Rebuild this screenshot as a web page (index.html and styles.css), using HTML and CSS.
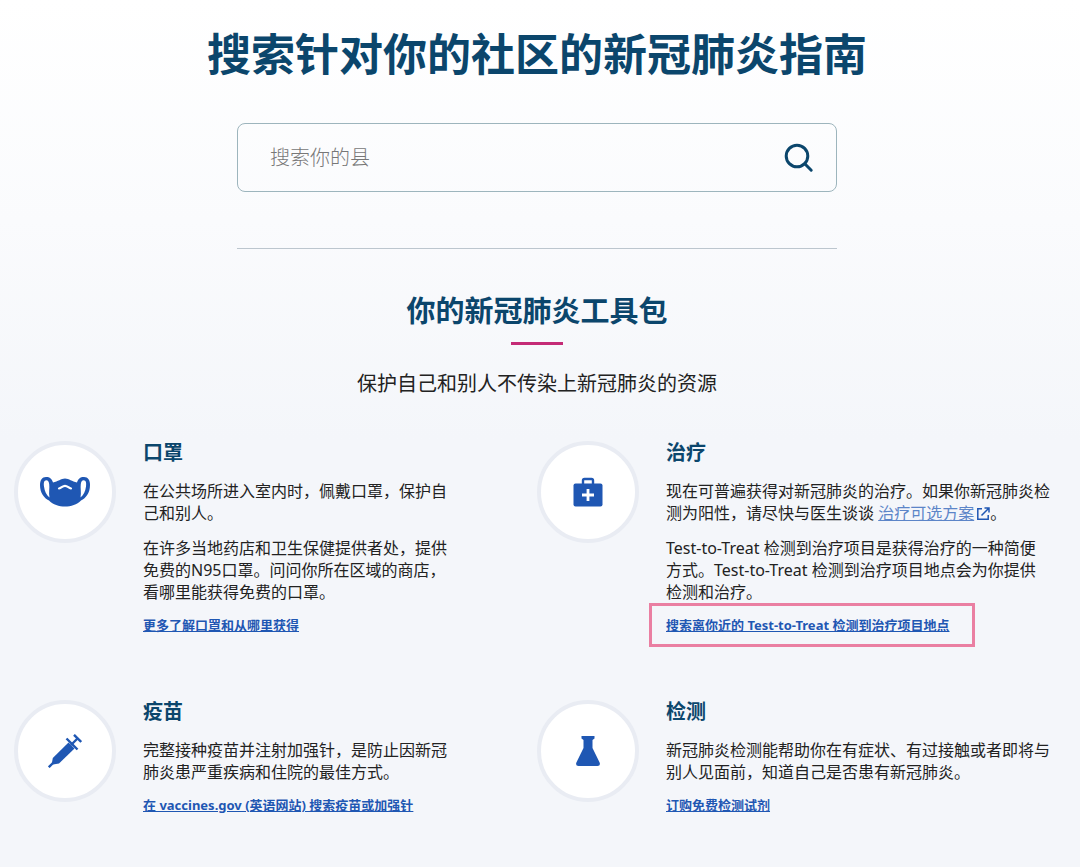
FILE: index.html
```html
<!DOCTYPE html>
<html lang="zh-CN">
<head>
  <meta charset="UTF-8">
  <meta name="viewport" content="width=device-width, initial-scale=1">
  <title>新冠肺炎指南</title>
  <link rel="stylesheet" href="styles.css">
</head>
<body>

  <main class="page">
    <section class="search">
      <h1>搜索针对你的社区的新冠肺炎指南</h1>
      <form class="search-box">
        <input type="text" id="county" aria-label="搜索你的县" placeholder="搜索你的县">
        <button type="submit" aria-label="搜索">
          <svg width="30" height="30" viewBox="0 0 30 30" fill="none" stroke="#0b466c" stroke-width="3" stroke-linecap="round">
            <circle cx="13" cy="13" r="10.8"/>
            <path d="M20.8 20.8L27.2 27.2"/>
          </svg>
        </button>
      </form>
    </section>

    <section class="toolkit">
      <h2>你的新冠肺炎工具包</h2>
      <p class="intro">保护自己和别人不传染上新冠肺炎的资源</p>

      <div class="items">
        <article class="item">
          <div class="icon">
            <svg width="50" height="32" viewBox="0 0 50 32">
              <path d="M6 1C2 1 0 4 0 9C0 17 4 22 9 24.500C13 28.500 19 30.500 25 30.500C31 30.500 37 28.500 41 24.500C46 22 50 17 50 9C50 4 48 1 44 1C40 1 38 3 37 6.500C32 5.500 29 2.500 25 2.500C21 2.500 18 5.500 13 6.500C12 3 10 1 6 1Z" fill="#1f57b3"/>
              <path d="M6.300 4.200C4 4.200 3.500 7 4 10.500C4.600 15.500 6.500 19 9.500 21.500C8.500 16.500 9.800 12 9.200 8C8.900 5.500 8 4.200 6.300 4.200ZM43.700 4.200C46 4.200 46.500 7 46 10.500C45.400 15.500 43.500 19 40.500 21.500C41.500 16.500 40.200 12 40.800 8C41.100 5.500 42 4.200 43.700 4.200Z" fill="#fff"/>
              <path d="M19 12.500C21.500 11.800 22.500 9.800 25 9.800C27.500 9.800 28.500 11.800 31 12.500" fill="none" stroke="#fff" stroke-width="2.200" stroke-linecap="round"/>
            </svg>
          </div>
          <div class="text">
            <h3>口罩</h3>
            <p>在公共场所进入室内时，佩戴口罩，保护自己和别人。</p>
            <p>在许多当地药店和卫生保健提供者处，提供免费的N95口罩。问问你所在区域的商店，看哪里能获得免费的口罩。</p>
            <a class="more" href="#">更多了解口罩和从哪里获得</a>
          </div>
        </article>

        <article class="item">
          <div class="icon">
            <svg width="30" height="30" viewBox="0 0 30 30">
              <path d="M10 7V3.500Q10 2 11.500 2H18.500Q20 2 20 3.500V7" fill="none" stroke="#1f57b3" stroke-width="2.400"/>
              <rect x="0.500" y="6.500" width="29" height="23" rx="2" fill="#1f57b3"/>
              <path d="M15 12V24M9 18H21" stroke="#fff" stroke-width="2.800"/>
            </svg>
          </div>
          <div class="text">
            <h3>治疗</h3>
            <p>现在可普遍获得对新冠肺炎的治疗。如果你新冠肺炎检测为阳性，请尽快与医生谈谈 <a href="#">治疗可选方案<svg class="external" width="14" height="14" viewBox="0 0 14 14" fill="none" stroke="#1f57b3" stroke-width="1.500"><path d="M6 1.800H1.800V12.200H12.200V8M8.500 1H13V5.500M13 1L5.500 8.500"/></svg></a>。</p>
            <p>Test-to-Treat 检测到治疗项目是获得治疗的一种简便方式。Test-to-Treat 检测到治疗项目地点会为你提供检测和治疗。</p>
            <a class="more marked" href="#">搜索离你近的 Test-to-Treat 检测到治疗项目地点</a>
          </div>
        </article>

        <article class="item">
          <div class="icon">
            <svg width="34" height="34" viewBox="0 0 34 34">
              <path d="M20.500 8.500L26.500 14.500L11 29.500L5 30.500L3.800 29.300L4.800 24Z" fill="#1f57b3"/>
              <path d="M0.800 33.200L5 29M23 11L30 4" stroke="#1f57b3" stroke-width="2.400" fill="none"/>
              <path d="M18.500 4.500L29.500 15.500M26 0.800L33.200 8" stroke="#1f57b3" stroke-width="2.400" fill="none"/>
            </svg>
          </div>
          <div class="text">
            <h3>疫苗</h3>
            <p>完整接种疫苗并注射加强针，是防止因新冠肺炎患严重疾病和住院的最佳方式。</p>
            <a class="more" href="#">在 vaccines.gov (英语网站) 搜索疫苗或加强针</a>
          </div>
        </article>

        <article class="item">
          <div class="icon">
            <svg width="24" height="30" viewBox="0 0 24 30" fill="#1f57b3">
              <path d="M5.500 0H18.500V2.500L16.500 4V12L23.600 26.500Q24.800 30 21.500 30H2.500Q-0.800 30 0.400 26.500L7.500 12V4L5.500 2.500Z"/>
            </svg>
          </div>
          <div class="text">
            <h3>检测</h3>
            <p>新冠肺炎检测能帮助你在有症状、有过接触或者即将与别人见面前，知道自己是否患有新冠肺炎。</p>
            <a class="more" href="#">订购免费检测试剂</a>
          </div>
        </article>
      </div>
    </section>
  </main>

</body>
</html>
```
FILE: styles.css
```css
* {
  margin: 0;
  padding: 0;
  box-sizing: border-box;
}

body {
  font-family: "Noto Sans", "Noto Sans CJK SC", sans-serif;
  font-size: 16px;
  line-height: 22px;
  color: #222;
  background: linear-gradient(to bottom, #fff 0, #fafbfd 220px, #f4f6fa 440px);
  min-height: 100vh;
}

.page {
  padding: 28px 20px 50px 14px;
}

.search {
  max-width: 600px;
  margin: 0 auto;
  padding-bottom: 56px;
  border-bottom: 1px solid #bcc6ce;
}

h1 {
  font-size: 44px;
  line-height: 52px;
  color: #0b466c;
  white-space: nowrap;
  display: flex;
  justify-content: center;
  margin-bottom: 43px;
}

.search-box {
  display: flex;
  align-items: center;
  height: 69px;
  padding: 0 22px 0 32px;
  border: 1px solid #9db5bd;
  border-radius: 8px;
}

.search-box input {
  flex: 1;
  min-width: 0;
  border: none;
  outline: none;
  background: none;
  font-family: inherit;
  font-size: 20px;
  font-weight: 300;
  color: #222;
}

.search-box input::placeholder {
  color: #777;
}

.search-box button {
  display: flex;
  border: none;
  background: none;
  cursor: pointer;
}

.toolkit {
  padding-top: 44px;
}

h2 {
  font-size: 29px;
  line-height: 36px;
  color: #0b466c;
  text-align: center;
}

h2::after {
  content: "";
  display: block;
  width: 52px;
  height: 3px;
  margin: 13px auto 0;
  background: #c42b76;
}

.intro {
  font-size: 20px;
  line-height: 24px;
  text-align: center;
  margin: 27px 0 45px;
}

.items {
  display: grid;
  grid-template-columns: 1fr 1fr;
  row-gap: 64px;
}

.item {
  display: flex;
  align-items: flex-start;
  gap: 27px;
}

.item:nth-child(odd) {
  padding-right: 80px;
}

.icon {
  flex: none;
  display: flex;
  align-items: center;
  justify-content: center;
  width: 102px;
  height: 102px;
  background: #fff;
  border: 4px solid #e9ecf3;
  border-radius: 50%;
}

.text {
  max-width: 24em;
}

h3 {
  font-size: 20px;
  line-height: 24px;
  color: #0b466c;
  margin-bottom: 15px;
}

.text p {
  margin-bottom: 13px;
}

.text p:last-of-type {
  margin-bottom: 10px;
}

.text a {
  color: #1f57b3;
}

.text p a {
  color: #5c85c8;
}

.external {
  margin-left: 2px;
  vertical-align: -2px;
}

.more {
  display: inline-block;
  font-size: 13px;
  font-weight: bold;
}

/* highlighted link */
.marked {
  position: relative;
}

.marked::after {
  content: "";
  position: absolute;
  inset: -11px -26px -11px -17px;
  border: 3px solid #ea7fa2;
}

@media (max-width: 800px) {
  h1 {
    font-size: 32px;
    white-space: normal;
  }

  .items {
    grid-template-columns: 1fr;
  }

  .item:nth-child(odd) {
    padding-right: 0;
  }
}
```
